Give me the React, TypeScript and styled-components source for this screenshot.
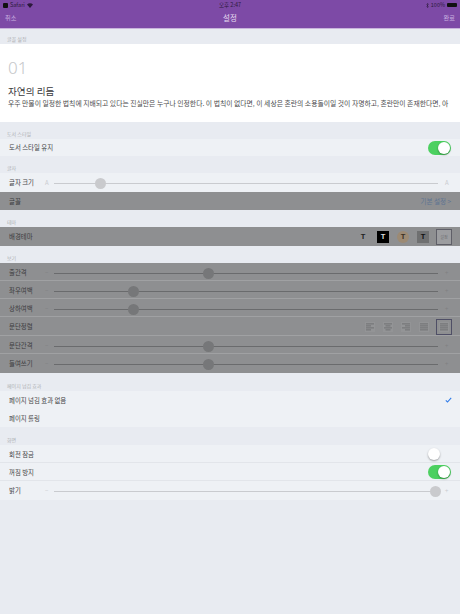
import React from "react";
import styled, { createGlobalStyle } from "styled-components";

const Global = createGlobalStyle`
  html, body { margin: 0; padding: 0; background: #e8ebf1; }
  body { font-family: "Noto Sans CJK KR", "Noto Sans", sans-serif; }
  * { box-sizing: border-box; }
`;
const Page = styled.div`
  width: 460px; height: 614px; overflow: hidden; background: #e8ebf1; display: flex; flex-direction: column;
`;
const Nav = styled.header`
  height: 29px; background: #7d4aa6; border-bottom: 1px solid #c9b4dc; display: flex; flex-direction: column; flex: none;
`;
const Status = styled.div`
  height: 10px; padding: 0 3px; display: flex; align-items: center; font-size: 5.5px; color: #2c1a3c;
`;
const StatusLeft = styled.div`display: flex; align-items: center; gap: 2px; flex: 1;`;
const StatusRight = styled.div`display: flex; align-items: center; gap: 2px; flex: 1; justify-content: flex-end;`;
const StatusTime = styled.div`flex: none;`;
const AppBadge = styled.span`width: 5px; height: 5px; background: #111; border-radius: 1px; display: block;`;
const Battery = styled.span`width: 10px; height: 4px; background: #111; border-radius: 1px; display: block;`;
const NavBar = styled.div`
  flex: 1; display: flex; align-items: center; justify-content: space-between; padding: 0 5px 3px 5px; position: relative;
`;
const NavButton = styled.span`font-size: 6.2px; color: #c9b0e0;`;
const NavTitle = styled.span`
  font-size: 7.5px; color: #e6dcf0; position: absolute; left: 0; right: 0; text-align: center; top: 0; line-height: 16px;
`;
const SectionHead = styled.div<{ $h?: number }>`
  height: ${p => p.$h ?? 17}px; flex: none; padding: 0 7px 1px; display: flex; align-items: flex-end;
  font-size: 5px; line-height: 8px; color: #aeb0b4; background: #e8ebf1;
`;
const Preview = styled.section`
  height: 78px; flex: none; background: #fff; padding: 13px 8px 0; overflow: hidden;
`;
const Chapter = styled.div`font-size: 17px; line-height: 22px; color: #c6c7ca; font-weight: 300; font-family: "Noto Sans", sans-serif;`;
const ChapterTitle = styled.div`font-size: 9.6px; line-height: 13px; color: #3a3a3c; margin-top: 6px;`;
const ChapterBody = styled.div`font-size: 6.83px; line-height: 11px; color: #4a4a4c; white-space: nowrap;`;
const Row = styled.div<{ $dim?: boolean; $h?: number; $line?: boolean }>`
  height: ${p => p.$h ?? 18}px; flex: none; display: flex; align-items: center; padding: 1px 9px 0;
  background: ${p => (p.$dim ? "#8e8f91" : "#eef1f5")};
  border-bottom: 1px solid ${p => (p.$line ? (p.$dim ? "#a0a1a3" : "#e2e5ea") : "transparent")};
  position: relative;
`;
const Label = styled.span<{ $dim?: boolean }>`
  font-size: 6.4px; color: ${p => (p.$dim ? "#3b3b3d" : "#444446")}; flex: none; white-space: nowrap;
`;
const Spacer = styled.div`flex: 1;`;
const Toggle = styled.span<{ $on: boolean }>`
  position: relative; width: 23px; height: 14px; border-radius: 7px; display: block; flex: none;
  background: ${p => (p.$on ? "#4cd060" : "transparent")};
  &::after {
    content: ""; position: absolute; top: 1px; width: 12px; height: 12px; border-radius: 50%; background: #fff;
    box-shadow: 0 1px 2px rgba(0,0,0,.35); left: ${p => (p.$on ? "10px" : "0")};
  }
`;
const Glyph = styled.span<{ $dim?: boolean; $left: number }>`
  position: absolute; left: ${p => p.$left}px; font-size: 6px; color: ${p => (p.$dim ? "#7f8082" : "#c9cbcf")};
`;
const Track = styled.div<{ $dim?: boolean }>`
  position: absolute; left: 54px; right: 22px; top: 56%; height: 1px;
  background: ${p => (p.$dim ? "#6a6b6d" : "#c9cbcf")};
`;
const Thumb = styled.span<{ $dim?: boolean }>`
  position: absolute; top: -5px; margin-left: -5px; width: 11px; height: 11px; border-radius: 50%;
  background: ${p => (p.$dim ? "#767779" : "#c9cacd")};
`;
const FontLink = styled.span`font-size: 6.5px; color: #5d7391; white-space: nowrap;`;
const Themes = styled.div`display: flex; align-items: center; gap: 8px; margin-right: -1px;`;
const ThemeChip = styled.span<{ $bg: string; $fg: string; $round?: boolean }>`
  width: 12px; height: 12px; display: flex; align-items: center; justify-content: center; font-size: 7.5px; font-weight: 700;
  background: ${p => p.$bg}; color: ${p => p.$fg}; border-radius: ${p => (p.$round ? "50%" : "0")};
  font-family: "Liberation Sans", sans-serif;
`;
const SelectedChip = styled.span`
  width: 16px; height: 16px; border: 1px solid #5f5f68; display: flex; align-items: center; justify-content: center;
  font-size: 4px; color: #6b6b6e; background: #9c9da0;
  margin-left: -1px; white-space: nowrap; overflow: hidden;
`;
const Aligns = styled.div`display: flex; align-items: center; gap: 8px; margin-right: -1px;`;
const AlignIcon = styled.svg`display: block; flex: none;`;
const AlignSelected = styled.span`
  width: 16px; height: 16px; border: 1px solid #4f4f66; display: flex; align-items: center; justify-content: center; margin-left: -1px;
`;
const Check = styled.svg`display: block; margin-right: -1px;`;

function Slider({ label, value, dim, line, h, minus = "−", plus = "+" }: {
  label: string; value: number; dim?: boolean; line?: boolean; h?: number; minus?: string; plus?: string;
}) {
  return (
    <Row $dim={dim} $line={line} $h={h}>
      <Label $dim={dim}>{label}</Label>
      <Glyph $dim={dim} $left={45}>{minus}</Glyph>
      <Track $dim={dim}><Thumb $dim={dim} style={{ left: `${value}%` }} /></Track>
      <Glyph $dim={dim} $left={445}>{plus}</Glyph>
    </Row>
  );
}

function Align({ kind }: { kind: number }) {
  const c = "#7d7e80";
  return (
    <AlignIcon width="10" height="10" viewBox="0 0 10 10">
      <rect width="10" height="10" fill="#939496" />
      {[0, 1, 2, 3].map(i => {
        const short = i % 2 === 1 ? 3 : 0;
        const w = 8 - (kind < 3 ? short : 0);
        const x = kind === 0 ? 1 : kind === 1 ? 1 + short / 2 : kind === 2 ? 1 + short : 1;
        return <rect key={i} x={x} y={1 + i * 2} width={w} height="1.6" fill={c} />;
      })}
    </AlignIcon>
  );
}

export default function App() {
  return (
    <Page>
      <Global />
      <Nav>
        <Status>
          <StatusLeft>
            <AppBadge />
            <span>Safari</span>
            <svg width="6" height="5" viewBox="0 0 10 8"><path d="M5 8 0 2.5a7 7 0 0 1 10 0z" fill="#2c1a3c" /></svg>
          </StatusLeft>
          <StatusTime>오후 2:47</StatusTime>
          <StatusRight>
            <svg width="3" height="5" viewBox="0 0 6 10"><path d="M1 2.5 5 7.5 3 9.5V.5l2 2L1 7.5" fill="none" stroke="#2c1a3c" strokeWidth="1" /></svg>
            <span>100%</span>
            <Battery />
          </StatusRight>
        </Status>
        <NavBar>
          <NavButton>취소</NavButton>
          <NavTitle>설정</NavTitle>
          <NavButton>완료</NavButton>
        </NavBar>
      </Nav>
      <SectionHead $h={15}>글꼴 설정</SectionHead>
      <Preview>
        <Chapter>01</Chapter>
        <ChapterTitle>자연의 리듬</ChapterTitle>
        <ChapterBody>우주 만물이 일정한 법칙에 지배되고 있다는 진실만은 누구나 인정한다. 이 법칙이 없다면, 이 세상은 혼란의 소용돌이일 것이 자명하고, 혼란만이 존재한다면, 아</ChapterBody>
      </Preview>
      <SectionHead>도서 스타일</SectionHead>
      <Row $h={17}>
        <Label>도서 스타일 유지</Label>
        <Spacer />
        <Toggle $on />
      </Row>
      <SectionHead>글자</SectionHead>
      <Slider label="글자 크기" value={12} h={19} minus="A" plus="A" />
      <Row $dim $h={18}>
        <Label $dim>글꼴</Label>
        <Spacer />
        <FontLink>기본 설정 &gt;</FontLink>
      </Row>
      <SectionHead>테마</SectionHead>
      <Row $dim $h={19}>
        <Label $dim>배경테마</Label>
        <Spacer />
        <Themes>
          <ThemeChip $bg="#8e8f91" $fg="#222">T</ThemeChip>
          <ThemeChip $bg="#000" $fg="#ddd">T</ThemeChip>
          <ThemeChip $bg="#9c8a74" $fg="#3a3024" $round>T</ThemeChip>
          <ThemeChip $bg="#6f7071" $fg="#111">T</ThemeChip>
          <SelectedChip>설정</SelectedChip>
        </Themes>
      </Row>
      <SectionHead>보기</SectionHead>
      <Slider dim line label="줄간격" value={40} h={18} />
      <Slider dim line label="좌우여백" value={20.5} h={18} />
      <Slider dim line label="상하여백" value={20.5} h={18} />
      <Row $dim $line $h={19}>
        <Label $dim>문단정렬</Label>
        <Spacer />
        <Aligns>
          <Align kind={0} />
          <Align kind={1} />
          <Align kind={2} />
          <Align kind={3} />
          <AlignSelected><Align kind={3} /></AlignSelected>
        </Aligns>
      </Row>
      <Slider dim line label="문단간격" value={40} h={18} />
      <Slider dim label="들여쓰기" value={40} h={19} />
      <SectionHead $h={18}>페이지 넘김 효과</SectionHead>
      <Row $h={18}>
        <Label>페이지 넘김 효과 없음</Label>
        <Spacer />
        <Check width="7" height="6" viewBox="0 0 7 6">
          <path d="M.8 3.4 2.5 5 6.2.8" fill="none" stroke="#2f7be8" strokeWidth="1.1" />
        </Check>
      </Row>
      <Row $h={18}><Label>페이지 롤링</Label></Row>
      <SectionHead $h={18}>화면</SectionHead>
      <Row $line $h={18}>
        <Label>회전 잠금</Label>
        <Spacer />
        <Toggle $on={false} />
      </Row>
      <Row $line $h={18}>
        <Label>꺼짐 방지</Label>
        <Spacer />
        <Toggle $on />
      </Row>
      <Slider label="밝기" value={99.2} h={19} />
    </Page>
  );
}
